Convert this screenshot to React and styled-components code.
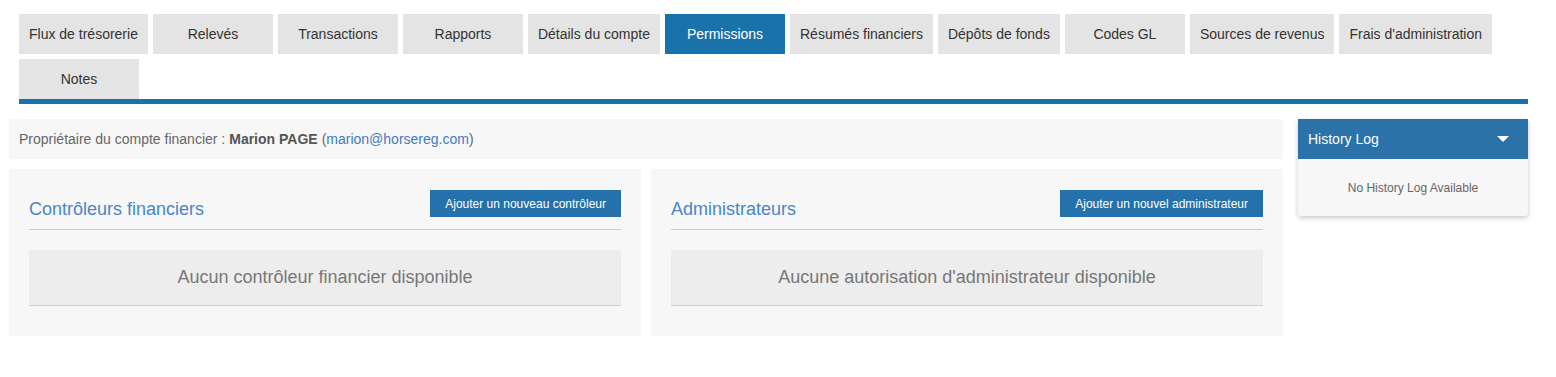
import styled, { createGlobalStyle } from "styled-components";

const GlobalStyle = createGlobalStyle`
  body {
    margin: 0;
    background: #fff;
    font-family: "Liberation Sans", Arial, sans-serif;
  }
`;

const Page = styled.div`
  width: 1556px;
  padding-top: 14px;
`;

const TabNav = styled.nav`
  margin: 0 28px 0 19px;
  border-bottom: 5px solid #1a72aa;
`;

const TabList = styled.ul`
  display: flex;
  flex-wrap: wrap;
  gap: 5px;
  list-style: none;
  margin: 0;
  padding: 0;
`;

const Tab = styled.li`
  min-width: 120px;
  height: 40px;
  padding: 0 10px;
  box-sizing: border-box;
  display: flex;
  align-items: center;
  justify-content: center;
  font-size: 14px;
  white-space: nowrap;
  color: ${(p) => (p.$active ? "#fff" : "#333")};
  background: ${(p) => (p.$active ? "#1a72aa" : "#e4e4e4")};
  cursor: pointer;
`;

const Main = styled.div`
  display: flex;
  gap: 15px;
  margin-top: 15px;
  padding-left: 9px;
`;

const Content = styled.div`
  width: 1274px;
  display: flex;
  flex-direction: column;
  gap: 10px;
`;

const InfoBar = styled.div`
  height: 40px;
  display: flex;
  align-items: center;
  padding-left: 10px;
  background: #f7f7f7;
  font-size: 14px;
  color: #666;

  b {
    color: #555;
    margin: 0 4px;
  }

  a {
    color: #3d7cc4;
    text-decoration: none;
  }
`;

const Panels = styled.div`
  display: grid;
  grid-template-columns: 1fr 1fr;
  gap: 10px;
`;

const Panel = styled.section`
  background: #f7f7f7;
  padding: 21px 20px 30px;
`;

const PanelHeader = styled.div`
  display: flex;
  justify-content: space-between;
  align-items: flex-start;
  padding-bottom: 8px;
  border-bottom: 1px solid #c8ccd3;
`;

const PanelTitle = styled.h3`
  margin: 9px 0 2px;
  font-size: 18px;
  line-height: 20px;
  font-weight: normal;
  color: #4a86c8;
`;

const AddButton = styled.button`
  height: 27px;
  padding: 0 15px;
  border: none;
  background: #2471ab;
  color: #fff;
  font-family: "Liberation Sans", Arial, sans-serif;
  font-size: 12px;
  cursor: pointer;
`;

const EmptyBox = styled.div`
  margin-top: 20px;
  height: 55px;
  display: flex;
  align-items: center;
  justify-content: center;
  background: #ededed;
  border-bottom: 1px solid #cfcfcf;
  font-size: 18px;
  color: #777;
`;

const Sidebar = styled.aside`
  width: 230px;
  align-self: flex-start;
  border-radius: 0 0 4px 4px;
  box-shadow: 0 2px 5px rgba(0, 0, 0, 0.22);
  overflow: hidden;
`;

const SideHeader = styled.div`
  height: 40px;
  display: flex;
  align-items: center;
  justify-content: space-between;
  padding: 0 19px 0 10px;
  background: #2a72a8;
  color: #fff;
  font-size: 14px;
`;

const Caret = styled.span`
  width: 0;
  height: 0;
  border-left: 6px solid transparent;
  border-right: 6px solid transparent;
  border-top: 6px solid #fff;
`;

const SideBody = styled.div`
  height: 57px;
  display: flex;
  align-items: center;
  justify-content: center;
  background: #f7f7f7;
  font-size: 12px;
  color: #666;
`;

const tabs = [
  "Flux de trésorerie",
  "Relevés",
  "Transactions",
  "Rapports",
  "Détails du compte",
  "Permissions",
  "Résumés financiers",
  "Dépôts de fonds",
  "Codes GL",
  "Sources de revenus",
  "Frais d'administration",
  "Notes",
];

const sections = [
  {
    title: "Contrôleurs financiers",
    button: "Ajouter un nouveau contrôleur",
    empty: "Aucun contrôleur financier disponible",
  },
  {
    title: "Administrateurs",
    button: "Ajouter un nouvel administrateur",
    empty: "Aucune autorisation d'administrateur disponible",
  },
];

function App() {
  return (
    <>
      <GlobalStyle />
      <Page>
        <TabNav>
          <TabList>
            {tabs.map((t) => (
              <Tab key={t} $active={t === "Permissions"}>
                {t}
              </Tab>
            ))}
          </TabList>
        </TabNav>
        <Main>
          <Content>
            <InfoBar>
              Propriétaire du compte financier :<b>Marion PAGE</b>(
              <a href="#">marion@horsereg.com</a>)
            </InfoBar>
            <Panels>
              {sections.map((s) => (
                <Panel key={s.title}>
                  <PanelHeader>
                    <PanelTitle>{s.title}</PanelTitle>
                    <AddButton>{s.button}</AddButton>
                  </PanelHeader>
                  <EmptyBox>{s.empty}</EmptyBox>
                </Panel>
              ))}
            </Panels>
          </Content>
          <Sidebar>
            <SideHeader>
              History Log
              <Caret />
            </SideHeader>
            <SideBody>No History Log Available</SideBody>
          </Sidebar>
        </Main>
      </Page>
    </>
  );
}

export default App;
